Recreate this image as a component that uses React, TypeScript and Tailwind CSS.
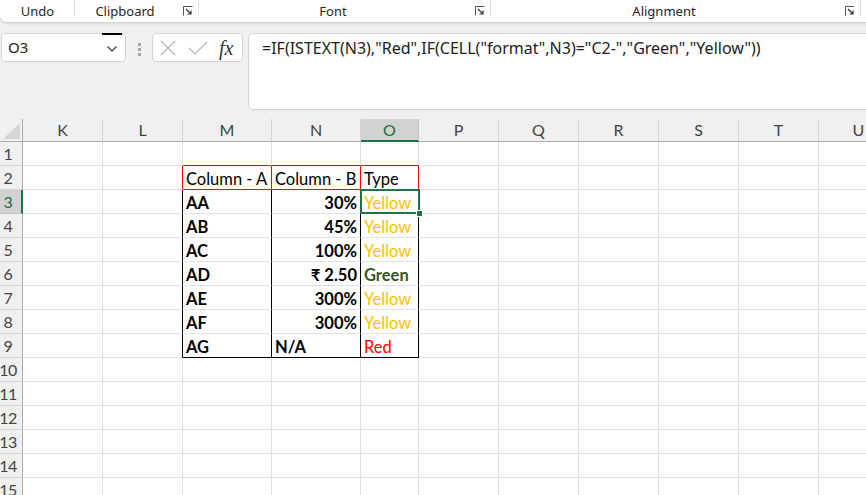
import React from "react";

const COLS = [
  { k: "", w: "w-[23px]" },
  { k: "K", w: "w-[80px]" },
  { k: "L", w: "w-[80px]" },
  { k: "M", w: "w-[89px]" },
  { k: "N", w: "w-[89px]" },
  { k: "O", w: "w-[58px]" },
  { k: "P", w: "w-[80px]" },
  { k: "Q", w: "w-[80px]" },
  { k: "R", w: "w-[80px]" },
  { k: "S", w: "w-[80px]" },
  { k: "T", w: "w-[80px]" },
  { k: "U", w: "w-[80px]" },
];

type CellData = { t: string; cls: string };

const DATA: Record<number, Record<number, CellData>> = {
  2: {
    3: { t: "Column - A", cls: "justify-start text-black" },
    4: { t: "Column - B", cls: "justify-start text-black" },
    5: { t: "Type", cls: "justify-start text-black" },
  },
  3: {
    3: { t: "AA", cls: "justify-start font-bold text-black" },
    4: { t: "30%", cls: "justify-end font-bold text-black" },
    5: { t: "Yellow", cls: "justify-start text-[#ffc000]" },
  },
  4: {
    3: { t: "AB", cls: "justify-start font-bold text-black" },
    4: { t: "45%", cls: "justify-end font-bold text-black" },
    5: { t: "Yellow", cls: "justify-start text-[#ffc000]" },
  },
  5: {
    3: { t: "AC", cls: "justify-start font-bold text-black" },
    4: { t: "100%", cls: "justify-end font-bold text-black" },
    5: { t: "Yellow", cls: "justify-start text-[#ffc000]" },
  },
  6: {
    3: { t: "AD", cls: "justify-start font-bold text-black" },
    4: { t: "₹ 2.50", cls: "justify-end font-bold text-black" },
    5: { t: "Green", cls: "justify-start font-bold text-[#375623]" },
  },
  7: {
    3: { t: "AE", cls: "justify-start font-bold text-black" },
    4: { t: "300%", cls: "justify-end font-bold text-black" },
    5: { t: "Yellow", cls: "justify-start text-[#ffc000]" },
  },
  8: {
    3: { t: "AF", cls: "justify-start font-bold text-black" },
    4: { t: "300%", cls: "justify-end font-bold text-black" },
    5: { t: "Yellow", cls: "justify-start text-[#ffc000]" },
  },
  9: {
    3: { t: "AG", cls: "justify-start font-bold text-black" },
    4: { t: "N/A", cls: "justify-start font-bold text-black" },
    5: { t: "Red", cls: "justify-start text-[#ff0000]" },
  },
};

function rightColor(r: number, c: number) {
  if (c >= 2 && c <= 5) {
    if (r === 2) return "border-r-[#ff0000]";
    if (r >= 3 && r <= 9) return "border-r-black";
  }
  return "border-r-[#e1e1e1]";
}

function bottomColor(r: number, c: number) {
  if (c >= 3 && c <= 5) {
    if (r === 1 || r === 2) return "border-b-[#ff0000]";
    if (r === 9) return "border-b-black";
  }
  return "border-b-[#e1e1e1]";
}

function Launcher() {
  return (
    <svg width="10" height="10" viewBox="0 0 10 10" className="block">
      <path d="M0.5 9.5 V0.5 H9.5" fill="none" stroke="#555" strokeWidth="1" />
      <path d="M3 3 L8 8 M8 4.5 V8 H4.5" fill="none" stroke="#333" strokeWidth="1.2" />
    </svg>
  );
}

function RibbonGroup({ label, w, launcher = false }: { label: string; w: string; launcher?: boolean }) {
  return (
    <div className={`relative ${w} h-full flex items-center justify-center ${launcher ? "pr-[24px]" : ""}`}>
      <span className="text-[13px] text-[#262626] leading-none">{label}</span>
      {launcher && (
        <div className="absolute right-[6px] top-[6px]">
          <Launcher />
        </div>
      )}
      <div className="absolute right-0 top-0 h-[16px] w-px bg-[#e1e1e1]" />
    </div>
  );
}

export default function App() {
  const rows = Array.from({ length: 16 }, (_, i) => i);
  return (
    <div
      className="relative w-[866px] h-[495px] overflow-hidden bg-[#f0f0f0]"
      style={{ fontFamily: "'Noto Sans', 'Open Sans', sans-serif" }}
    >
      {/* Ribbon */}
      <div className="h-[22px] w-[880px] bg-white rounded-bl-[7px] shadow-[0_1px_3px_rgba(0,0,0,0.18)] flex">
        <RibbonGroup label="Undo" w="w-[75px]" />
        <RibbonGroup label="Clipboard" w="w-[124px]" launcher />
        <RibbonGroup label="Font" w="w-[292px]" launcher />
        <RibbonGroup label="Alignment" w="w-[370px]" launcher />
      </div>

      {/* Formula bar */}
      <div className="flex items-start mt-[11px] h-[77px]">
        <div className="relative ml-[1px] w-[125px] h-[29px] bg-white border border-[#d4d4d4] rounded-[4px] flex items-center">
          <span className="ml-[6px] text-[15px] text-[#222] leading-none">O3</span>
          <div className="absolute right-[3px] -top-px w-[20px] h-[1.5px] bg-black" />
          <svg className="absolute right-[8px] top-[12px]" width="10" height="6" viewBox="0 0 10 6">
            <path d="M0.5 0.5 L5 5 L9.5 0.5" fill="none" stroke="#333" strokeWidth="1.1" />
          </svg>
        </div>
        <div className="ml-[12px] mt-[10px] flex flex-col gap-[2px]">
          <div className="w-[3px] h-[3px] bg-[#a6a6a6]" />
          <div className="w-[3px] h-[3px] bg-[#a6a6a6]" />
          <div className="w-[3px] h-[3px] bg-[#a6a6a6]" />
        </div>
        <div className="ml-[11px] w-[91px] h-[29px] bg-white border border-[#d4d4d4] rounded-[4px] flex items-center">
          <svg className="ml-[7px]" width="16" height="16" viewBox="0 0 16 16">
            <path d="M1 1 L15 15 M15 1 L1 15" stroke="#b4b4b4" strokeWidth="1.1" fill="none" />
          </svg>
          <svg className="ml-[12px]" width="20" height="16" viewBox="0 0 20 16">
            <path d="M1 8 L7 14 L19 2" stroke="#b4b4b4" strokeWidth="1.1" fill="none" />
          </svg>
          <span
            className="ml-[11px] text-[20px] italic text-[#333] leading-none"
            style={{ fontFamily: "'Liberation Serif', 'DejaVu Serif', serif" }}
          >
            fx
          </span>
        </div>
        <div className="ml-[5px] flex-1 mr-[-12px] h-[77px] bg-white border border-[#d4d4d4] rounded-[5px]">
          <div className="ml-[13px] mt-[4px] text-[16px] text-[#222] leading-[20px] whitespace-nowrap">
            =IF(ISTEXT(N3),"Red",IF(CELL("format",N3)="C2-","Green","Yellow"))
          </div>
        </div>
      </div>

      {/* Grid */}
      <div className="mt-[9px] flex flex-col" style={{ fontFamily: "Lato, 'Noto Sans', sans-serif" }}>
        {rows.map((r) => (
          <div key={r} className={`flex ${r === 0 ? "h-[23px]" : "h-[24px]"}`}>
            {COLS.map((col, c) => {
              if (r === 0) {
                if (c === 0) {
                  return (
                    <div
                      key={c}
                      className={`relative ${col.w} h-full shrink-0 border-r border-b border-r-[#ababab] border-b-[#ababab] bg-[#f0f0f0]`}
                    >
                      <svg className="absolute left-[3px] top-[4px]" width="17" height="16" viewBox="0 0 17 16">
                        <polygon points="17,0 17,16 0,16" fill="#d6d6d6" />
                      </svg>
                    </div>
                  );
                }
                const sel = col.k === "O";
                return (
                  <div
                    key={c}
                    className={`${col.w} h-full shrink-0 flex items-center justify-center text-[16px] leading-none ${
                      sel
                        ? "bg-[#d2d2d2] text-[#1e6b41] border-r border-r-[#c6c6c6] border-b-2 border-b-[#217346]"
                        : "bg-[#f0f0f0] text-[#444] border-r border-r-[#d4d4d4] border-b border-b-[#ababab]"
                    }`}
                  >
                    {col.k}
                  </div>
                );
              }
              if (c === 0) {
                const sel = r === 3;
                return (
                  <div
                    key={c}
                    className={`${col.w} h-full shrink-0 overflow-hidden border-b ${
                      sel
                        ? "bg-[#d2d2d2] border-r-2 border-r-[#217346] border-b-[#c6c6c6] text-[#1e6b41]"
                        : "bg-[#f0f0f0] border-r border-r-[#ababab] border-b-[#d4d4d4] text-[#444]"
                    }`}
                  >
                    <div className="w-[30px] -ml-[7px] h-full flex items-center justify-center text-[16px] leading-none tracking-[-0.5px]">
                      {r}
                    </div>
                  </div>
                );
              }
              const d = DATA[r]?.[c];
              const isSel = r === 3 && c === 5;
              return (
                <div
                  key={c}
                  className={`${col.w} h-full shrink-0 border-r border-b bg-white ${rightColor(r, c)} ${bottomColor(
                    r,
                    c
                  )} ${isSel ? "relative z-10" : ""}`}
                >
                  {d && (
                    <div
                      className={`h-full flex items-end px-[3px] text-[16.5px] leading-[20px] whitespace-nowrap ${d.cls}`}
                    >
                      {d.t}
                    </div>
                  )}
                  {isSel && (
                    <>
                      <div className="absolute -top-px -left-px -right-[2px] -bottom-px border-2 border-[#217346]" />
                      <div className="absolute -right-[5px] -bottom-[4px] w-[7px] h-[7px] bg-[#217346] border border-white" />
                    </>
                  )}
                </div>
              );
            })}
          </div>
        ))}
      </div>
    </div>
  );
}
